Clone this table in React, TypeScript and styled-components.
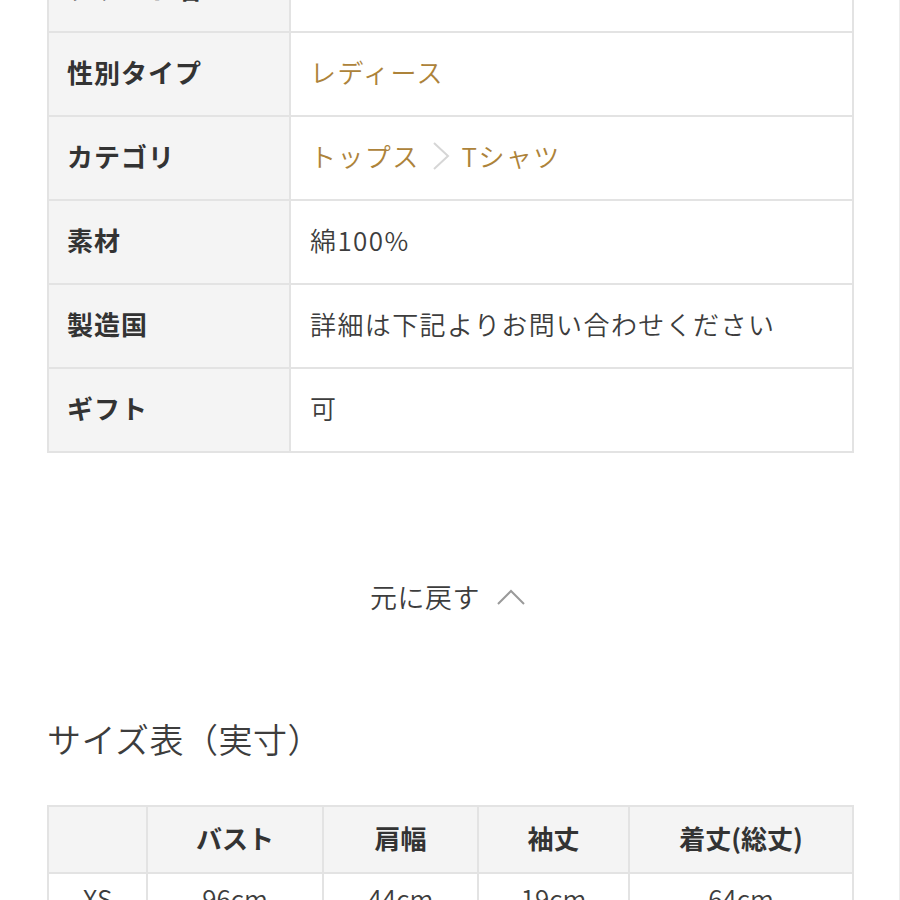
import React from "react";
import styled, { createGlobalStyle } from "styled-components";

const Global = createGlobalStyle`
  html, body { margin: 0; padding: 0; background: #fff; }
  body {
    font-family: "Noto Sans CJK JP", "Noto Sans", sans-serif;
    color: #3a3a3a;
    overflow: hidden;
  }
`;

const Page = styled.div`
  width: 900px;
  height: 900px;
  box-sizing: border-box;
  border-right: 1px solid #ececec;
  padding: 0 46px 0 47px;
  overflow: hidden;
`;

const SpecTable = styled.table`
  width: 807px;
  margin-top: -53px;
  border-collapse: collapse;
  border: 2px solid #e3e3e3;
  table-layout: fixed;
`;

const LabelCell = styled.th`
  width: 242px;
  height: 84px;
  box-sizing: border-box;
  background: #f4f4f4;
  border: 2px solid #e3e3e3;
  padding: 0 0 5px 18px;
  text-align: left;
  font-size: 26px;
  font-weight: 700;
  letter-spacing: 1px;
  color: #333;
`;

const ValueCell = styled.td`
  height: 84px;
  box-sizing: border-box;
  background: #fff;
  border: 2px solid #e3e3e3;
  padding: 0 0 5px 19px;
  font-size: 26px;
  font-weight: 350;
  letter-spacing: 1.4px;
  color: #3d3d3d;
`;

const Crumbs = styled.span`
  display: inline-flex;
  align-items: center;
  gap: 10px;
`;

const Link = styled.span`
  color: #ad833a;
`;

const Sep = styled.svg`
  width: 22px;
  height: 32px;
  display: block;
`;

const BackRow = styled.div`
  display: flex;
  justify-content: center;
  align-items: center;
  gap: 16px;
  margin-top: 124px;
  padding-right: 4px;
  font-size: 27px;
  font-weight: 350;
  color: #3d3d3d;
  letter-spacing: 0.5px;
`;

const Heading = styled.h2`
  margin: 103px 0 0;
  font-size: 34px;
  font-weight: 350;
  color: #3d3d3d;
  letter-spacing: 0.5px;
  line-height: 1.2;
`;

const SizeTable = styled.table`
  width: 807px;
  margin-top: 45px;
  border-collapse: collapse;
  border: 2px solid #e3e3e3;
  table-layout: fixed;
`;

const HeadCell = styled.th<{ $w?: number }>`
  width: ${(p) => (p.$w ? `${p.$w}px` : "auto")};
  height: 67px;
  box-sizing: border-box;
  background: #f4f4f4;
  border: 2px solid #e3e3e3;
  text-align: center;
  font-size: 26px;
  font-weight: 700;
  color: #333;
  padding: 0 0 3px;
`;

const DataCell = styled.td`
  height: 67px;
  box-sizing: border-box;
  border: 2px solid #e3e3e3;
  text-align: center;
  font-size: 26px;
  font-weight: 350;
  color: #3d3d3d;
  padding: 0 0 18px;
`;

const specs: { label: string; value: React.ReactNode }[] = [
  { label: "ブランド名", value: "" },
  { label: "性別タイプ", value: <Link>レディース</Link> },
  {
    label: "カテゴリ",
    value: (
      <Crumbs>
        <Link>トップス</Link>
        <Sep viewBox="0 0 22 32">
          <path d="M4 3 L18 16 L4 29" fill="none" stroke="#d6d6d6" strokeWidth="2" />
        </Sep>
        <Link>Tシャツ</Link>
      </Crumbs>
    ),
  },
  { label: "素材", value: "綿100%" },
  { label: "製造国", value: "詳細は下記よりお問い合わせください" },
  { label: "ギフト", value: "可" },
];

const headers: { t: string; w?: number }[] = [
  { t: "", w: 99 },
  { t: "バスト", w: 176 },
  { t: "肩幅", w: 155 },
  { t: "袖丈", w: 151 },
  { t: "着丈(総丈)" },
];

export default function App() {
  return (
    <>
      <Global />
      <Page>
        <SpecTable>
          <tbody>
            {specs.map((s) => (
              <tr key={s.label}>
                <LabelCell>{s.label}</LabelCell>
                <ValueCell>{s.value}</ValueCell>
              </tr>
            ))}
          </tbody>
        </SpecTable>

        <BackRow>
          <span>元に戻す</span>
          <svg width="30" height="18" viewBox="0 0 30 18">
            <path d="M2 16 L15 3 L28 16" fill="none" stroke="#9a9a9a" strokeWidth="2" />
          </svg>
        </BackRow>

        <Heading>サイズ表（実寸）</Heading>

        <SizeTable>
          <thead>
            <tr>
              {headers.map((h, i) => (
                <HeadCell key={i} $w={h.w}>
                  {h.t}
                </HeadCell>
              ))}
            </tr>
          </thead>
          <tbody>
            <tr>
              <DataCell>XS</DataCell>
              <DataCell>96cm</DataCell>
              <DataCell>44cm</DataCell>
              <DataCell>19cm</DataCell>
              <DataCell>64cm</DataCell>
            </tr>
          </tbody>
        </SizeTable>
      </Page>
    </>
  );
}
